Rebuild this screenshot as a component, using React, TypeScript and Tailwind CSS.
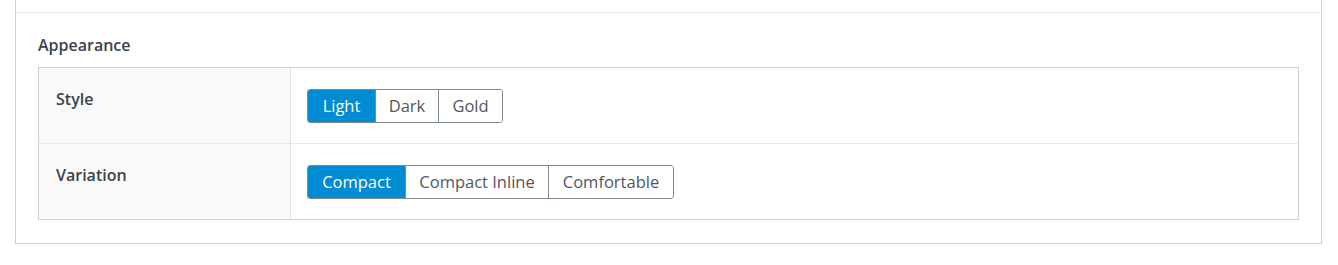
import React from "react"

type Opt = { label: string; w: string }

const styles: Opt[] = [
  { label: "Light", w: "w-[67px]" },
  { label: "Dark", w: "w-[63px]" },
  { label: "Gold", w: "w-[64px]" },
]

const variations: Opt[] = [
  { label: "Compact", w: "w-[97px]" },
  { label: "Compact Inline", w: "w-[143px]" },
  { label: "Comfortable", w: "w-[125px]" },
]

function Segmented({ options, active }: { options: Opt[]; active: number }) {
  return (
    <div className="flex h-[34px] rounded-[3px] border border-[#7e8993] overflow-hidden">
      {options.map((o, i) => (
        <button
          key={o.label}
          className={
            o.w +
            " h-full flex items-center justify-center text-[16.5px] leading-none " +
            (i > 0 ? "border-l border-[#7e8993] " : "") +
            (i === active ? "bg-[#008bd2] text-white" : "bg-white text-[#50575e]")
          }
        >
          {o.label}
        </button>
      ))}
    </div>
  )
}

function Row({ label, children, last }: { label: string; children: React.ReactNode; last?: boolean }) {
  return (
    <div className={"flex " + (last ? "" : "border-b border-[#e8e8e8]")}>
      <div className="w-[252px] shrink-0 bg-[#f9f9f9] border-r border-[#e2e2e2] pl-[17px] pt-[20px] pb-[20px] text-[16px] font-semibold text-[#3c434a] leading-[22px]">
        {label}
      </div>
      <div className="flex-1 pl-[16px] pt-[21px] pb-[20px]">{children}</div>
    </div>
  )
}

export default function App() {
  return (
    <div className="bg-white w-[1338px] h-[265px] font-['Open_Sans',sans-serif]">
      <div className="ml-[15px] w-[1307px] border-x border-b border-[#cfd0d3]">
        <div className="h-[13px] mx-[1px] border-b border-[#e8e8e8]" />
        <div className="px-[22px] pb-[23px]">
          <h3 className="pt-[22px] mb-[12px] text-[16px] leading-[20px] font-semibold text-[#3c434a]">
            Appearance
          </h3>
          <div className="border border-[#cfd0d3]">
            <Row label="Style">
              <div className="flex">
                <Segmented options={styles} active={0} />
              </div>
            </Row>
            <Row label="Variation" last>
              <div className="flex">
                <Segmented options={variations} active={0} />
              </div>
            </Row>
          </div>
        </div>
      </div>
    </div>
  )
}
